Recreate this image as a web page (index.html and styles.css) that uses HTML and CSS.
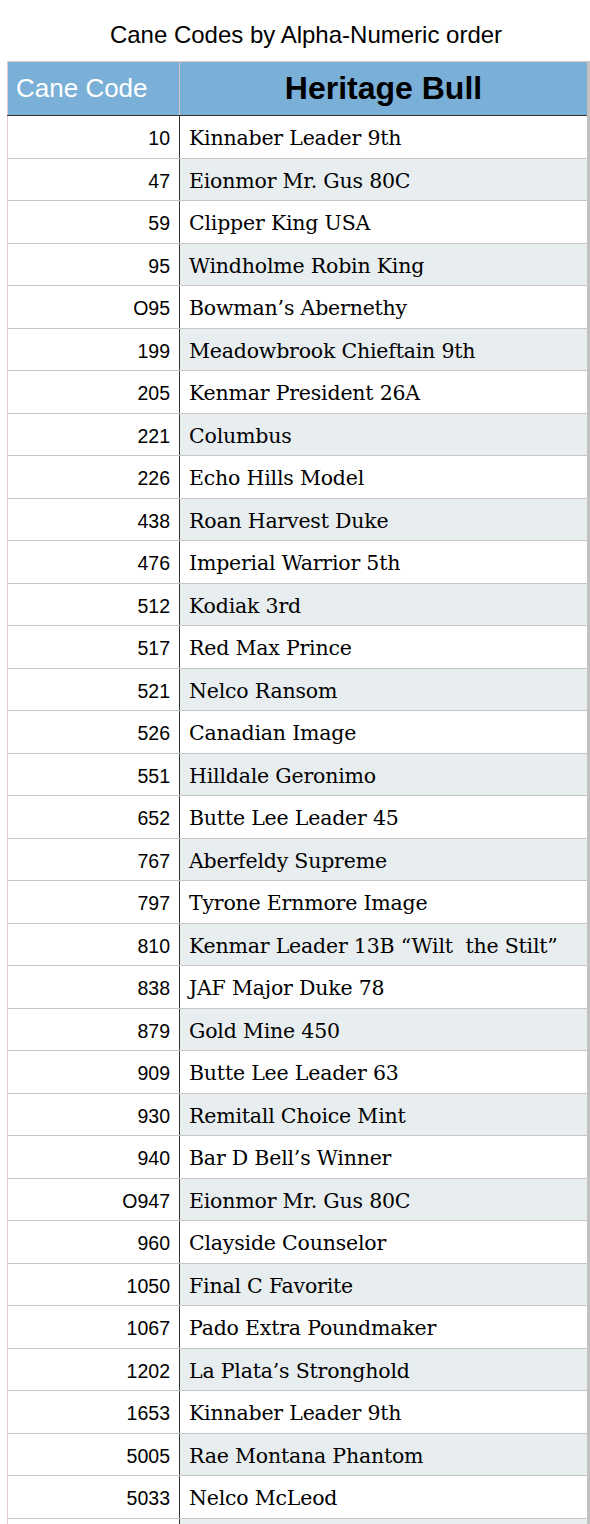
FILE: index.html
```html
<!DOCTYPE html>
<html>
<head>
<meta charset="utf-8">
<link rel="stylesheet" href="styles.css">
</head>
<body>
<div class="title">Cane Codes by Alpha-Numeric order</div>
<table class="codes">
  <thead>
    <tr><th class="code-h">Cane Code</th><th class="bull-h">Heritage Bull</th></tr>
  </thead>
  <tbody>
    <tr><td class="code">10</td><td class="bull">Kinnaber Leader 9th</td></tr>
    <tr><td class="code">47</td><td class="bull">Eionmor Mr. Gus 80C</td></tr>
    <tr><td class="code">59</td><td class="bull">Clipper King USA</td></tr>
    <tr><td class="code">95</td><td class="bull">Windholme Robin King</td></tr>
    <tr><td class="code">O95</td><td class="bull">Bowman’s Abernethy</td></tr>
    <tr><td class="code">199</td><td class="bull">Meadowbrook Chieftain 9th</td></tr>
    <tr><td class="code">205</td><td class="bull">Kenmar President 26A</td></tr>
    <tr><td class="code">221</td><td class="bull">Columbus</td></tr>
    <tr><td class="code">226</td><td class="bull">Echo Hills Model</td></tr>
    <tr><td class="code">438</td><td class="bull">Roan Harvest Duke</td></tr>
    <tr><td class="code">476</td><td class="bull">Imperial Warrior 5th</td></tr>
    <tr><td class="code">512</td><td class="bull">Kodiak 3rd</td></tr>
    <tr><td class="code">517</td><td class="bull">Red Max Prince</td></tr>
    <tr><td class="code">521</td><td class="bull">Nelco Ransom</td></tr>
    <tr><td class="code">526</td><td class="bull">Canadian Image</td></tr>
    <tr><td class="code">551</td><td class="bull">Hilldale Geronimo</td></tr>
    <tr><td class="code">652</td><td class="bull">Butte Lee Leader 45</td></tr>
    <tr><td class="code">767</td><td class="bull">Aberfeldy Supreme</td></tr>
    <tr><td class="code">797</td><td class="bull">Tyrone Ernmore Image</td></tr>
    <tr><td class="code">810</td><td class="bull">Kenmar Leader 13B “Wilt&nbsp; the Stilt”</td></tr>
    <tr><td class="code">838</td><td class="bull">JAF Major Duke 78</td></tr>
    <tr><td class="code">879</td><td class="bull">Gold Mine 450</td></tr>
    <tr><td class="code">909</td><td class="bull">Butte Lee Leader 63</td></tr>
    <tr><td class="code">930</td><td class="bull">Remitall Choice Mint</td></tr>
    <tr><td class="code">940</td><td class="bull">Bar D Bell’s Winner</td></tr>
    <tr><td class="code">O947</td><td class="bull">Eionmor Mr. Gus 80C</td></tr>
    <tr><td class="code">960</td><td class="bull">Clayside Counselor</td></tr>
    <tr><td class="code">1050</td><td class="bull">Final C Favorite</td></tr>
    <tr><td class="code">1067</td><td class="bull">Pado Extra Poundmaker</td></tr>
    <tr><td class="code">1202</td><td class="bull">La Plata’s Stronghold</td></tr>
    <tr><td class="code">1653</td><td class="bull">Kinnaber Leader 9th</td></tr>
    <tr><td class="code">5005</td><td class="bull">Rae Montana Phantom</td></tr>
    <tr><td class="code">5033</td><td class="bull">Nelco McLeod</td></tr>
    <tr><td class="code"></td><td class="bull"></td></tr>
  </tbody>
</table>
</body>
</html>
```
FILE: styles.css
```css
html, body {
  margin: 0;
  padding: 0;
  background: #ffffff;
}

body {
  width: 590px;
  overflow: hidden;
  font-family: "Liberation Sans", Arial, sans-serif;
  color: #000;
}

.title {
  box-sizing: border-box;
  height: 61px;
  padding-top: 21px;
  padding-left: 22px;
  font-size: 24px;
  line-height: 28px;
  text-align: center;
}

.codes {
  margin-left: 7px;
  width: 583px;
  border-collapse: collapse;
  table-layout: fixed;
  border-left: 1px solid #e7caca;
  border-right: 3px solid #c2c2c2;
  border-top: 1px solid #e7caca;
}

.code-h,
.bull-h {
  height: 53px;
  padding: 0;
  background: #7ab0d8;
  vertical-align: middle;
  border-bottom: 1px solid #333333;
}

.code-h {
  width: 163px;
  padding-left: 8px;
  text-align: left;
  font-weight: normal;
  font-size: 26px;
  color: #ffffff;
  border-right: 1px solid #d8c6c6;
}

.bull-h {
  text-align: center;
  font-weight: bold;
  font-size: 32px;
  color: #000;
}

.codes tbody tr {
  height: 42.5px;
}

.codes td {
  padding: 3px 0 0 0;
  border-bottom: 1px solid #c6c6c6;
  vertical-align: middle;
}

.code {
  text-align: right;
  padding-right: 9px !important;
  font-size: 19.5px;
  line-height: 22px;
  border-right: 1px solid #333333;
  background: #ffffff;
}

.bull {
  padding-left: 9px !important;
  font-family: "DejaVu Serif", serif;
  font-size: 20.5px;
  line-height: 22px;
  letter-spacing: -0.2px;
  white-space: nowrap;
}

.codes tbody tr:nth-child(even) .bull {
  background: #e8edef;
}
```
